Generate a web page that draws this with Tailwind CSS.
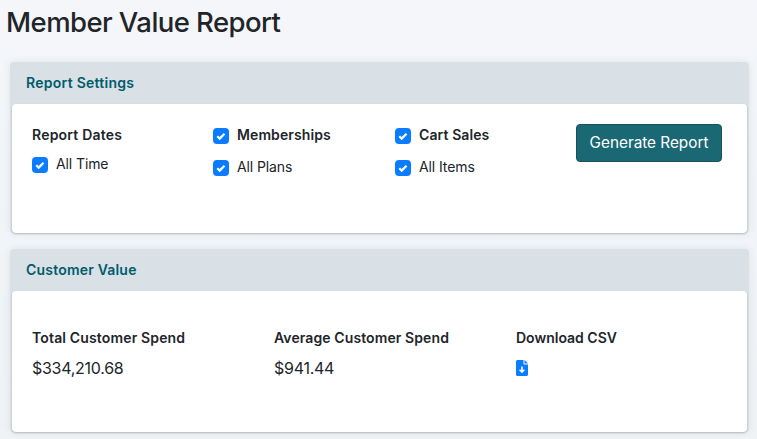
<!DOCTYPE html>
<html lang="en">
<head>
    <meta charset="UTF-8">
    <meta name="viewport" content="width=device-width, initial-scale=1.0">
    <title>Member Value Report</title>
    <script src="https://cdn.jsdelivr.net/npm/@tailwindcss/browser@4"></script>
</head>
<body class="h-[439px] overflow-hidden bg-gradient-to-b from-[#f4f6fa] to-[#eff3f6] font-['Inter',sans-serif] text-[#212529]">

    <!-- Page title -->
    <h1 class="h-[62px] pl-[6px] pt-[4px] text-[27.5px] leading-[36px] font-medium tracking-[-0.56px]">Member Value Report</h1>

    <div class="flex flex-col gap-[16px] pl-[10px] pr-[8px]">

        <!-- Report Settings -->
        <section class="rounded-[4px] bg-[#d9e0e6] shadow-[0_0_8px_rgba(0,0,0,0.08)]">
            <h2 class="h-[42px] pl-[16px] text-[14px] leading-[42px] font-semibold tracking-[0.27px] text-[#005c6b]">Report Settings</h2>
            <div class="mx-[2px] flex h-[129px] rounded-[4px] bg-white pl-[20px] pt-[20px] shadow-[0_1px_2px_rgba(0,0,0,0.22)]">
                <div class="w-[181px]">
                    <p class="h-[22px] text-[14px] leading-[22px] font-semibold tracking-[0.2px]">Report Dates</p>
                    <label class="mt-[9px] flex items-start gap-[8px] text-[14px] leading-[18px] tracking-[-0.1px]">
                        <svg class="mt-[2px] h-[16px] w-[16px]" viewBox="0 0 16 16"><rect width="16" height="16" rx="4" fill="#0a7cff"/><path d="M4.3 8.3l2.4 2.3 4.8-4.8" fill="none" stroke="#fff" stroke-width="2.2"/></svg>
                        All Time
                    </label>
                </div>
                <div class="w-[182px]">
                    <label class="flex items-start gap-[8px] text-[14px] leading-[22px] font-semibold tracking-[0.1px]">
                        <svg class="mt-[4px] h-[16px] w-[16px]" viewBox="0 0 16 16"><rect width="16" height="16" rx="4" fill="#0a7cff"/><path d="M4.3 8.3l2.4 2.3 4.8-4.8" fill="none" stroke="#fff" stroke-width="2.2"/></svg>
                        Memberships
                    </label>
                    <label class="mt-[12px] flex items-start gap-[8px] text-[14px] leading-[18px] tracking-[-0.1px]">
                        <svg class="mt-[2px] h-[16px] w-[16px]" viewBox="0 0 16 16"><rect width="16" height="16" rx="4" fill="#0a7cff"/><path d="M4.3 8.3l2.4 2.3 4.8-4.8" fill="none" stroke="#fff" stroke-width="2.2"/></svg>
                        All Plans
                    </label>
                </div>
                <div class="w-[181px]">
                    <label class="flex items-start gap-[8px] text-[14px] leading-[22px] font-semibold tracking-[0.1px]">
                        <svg class="mt-[4px] h-[16px] w-[16px]" viewBox="0 0 16 16"><rect width="16" height="16" rx="4" fill="#0a7cff"/><path d="M4.3 8.3l2.4 2.3 4.8-4.8" fill="none" stroke="#fff" stroke-width="2.2"/></svg>
                        Cart Sales
                    </label>
                    <label class="mt-[12px] flex items-start gap-[8px] text-[14px] leading-[18px] tracking-[-0.1px]">
                        <svg class="mt-[2px] h-[16px] w-[16px]" viewBox="0 0 16 16"><rect width="16" height="16" rx="4" fill="#0a7cff"/><path d="M4.3 8.3l2.4 2.3 4.8-4.8" fill="none" stroke="#fff" stroke-width="2.2"/></svg>
                        All Items
                    </label>
                </div>
                <button class="h-[38px] w-[146px] rounded-[4px] border border-[#14525e] bg-[#1b6875] pt-[1px] text-[15.3px] text-white">Generate Report</button>
            </div>
        </section>

        <!-- Customer Value -->
        <section class="rounded-[4px] bg-[#d9e0e6] shadow-[0_0_8px_rgba(0,0,0,0.08)]">
            <h2 class="h-[42px] pl-[16px] text-[14px] leading-[42px] font-semibold tracking-[0.2px] text-[#005c6b]">Customer Value</h2>
            <div class="mx-[2px] grid h-[141px] grid-cols-[242px_242px_1fr] rounded-[4px] bg-white pl-[20px] pt-[36px] shadow-[0_1px_2px_rgba(0,0,0,0.22)]">
                <div>
                    <p class="h-[22px] text-[14px] leading-[22px] font-semibold tracking-[0.15px]">Total Customer Spend</p>
                    <p class="mt-[7px] text-[16px] leading-[24px] tracking-[-0.27px]">$334,210.68</p>
                </div>
                <div>
                    <p class="h-[22px] text-[14px] leading-[22px] font-semibold tracking-[0.1px]">Average Customer Spend</p>
                    <p class="mt-[7px] text-[16px] leading-[24px] tracking-[-0.27px]">$941.44</p>
                </div>
                <div>
                    <p class="h-[22px] text-[14px] leading-[22px] font-semibold">Download CSV</p>
                    <svg class="mt-[11px] h-[16px] w-[12px]" viewBox="0 0 12 16"><path fill="#0a7cff" d="M1.5 0H7.5V3.2C7.5 4 8 4.5 8.8 4.5H12V14.5C12 15.3 11.3 16 10.5 16H1.5C.7 16 0 15.3 0 14.5V1.5C0 .7.7 0 1.5 0Z"/><path fill="#0a7cff" d="M8.5 0L12 3.5H8.5Z"/><path d="M6 6.5V12M3.6 9.8L6 12.2 8.4 9.8" fill="none" stroke="#fff" stroke-width="1.6"/></svg>
                </div>
            </div>
        </section>
    </div>

</body>
</html>
